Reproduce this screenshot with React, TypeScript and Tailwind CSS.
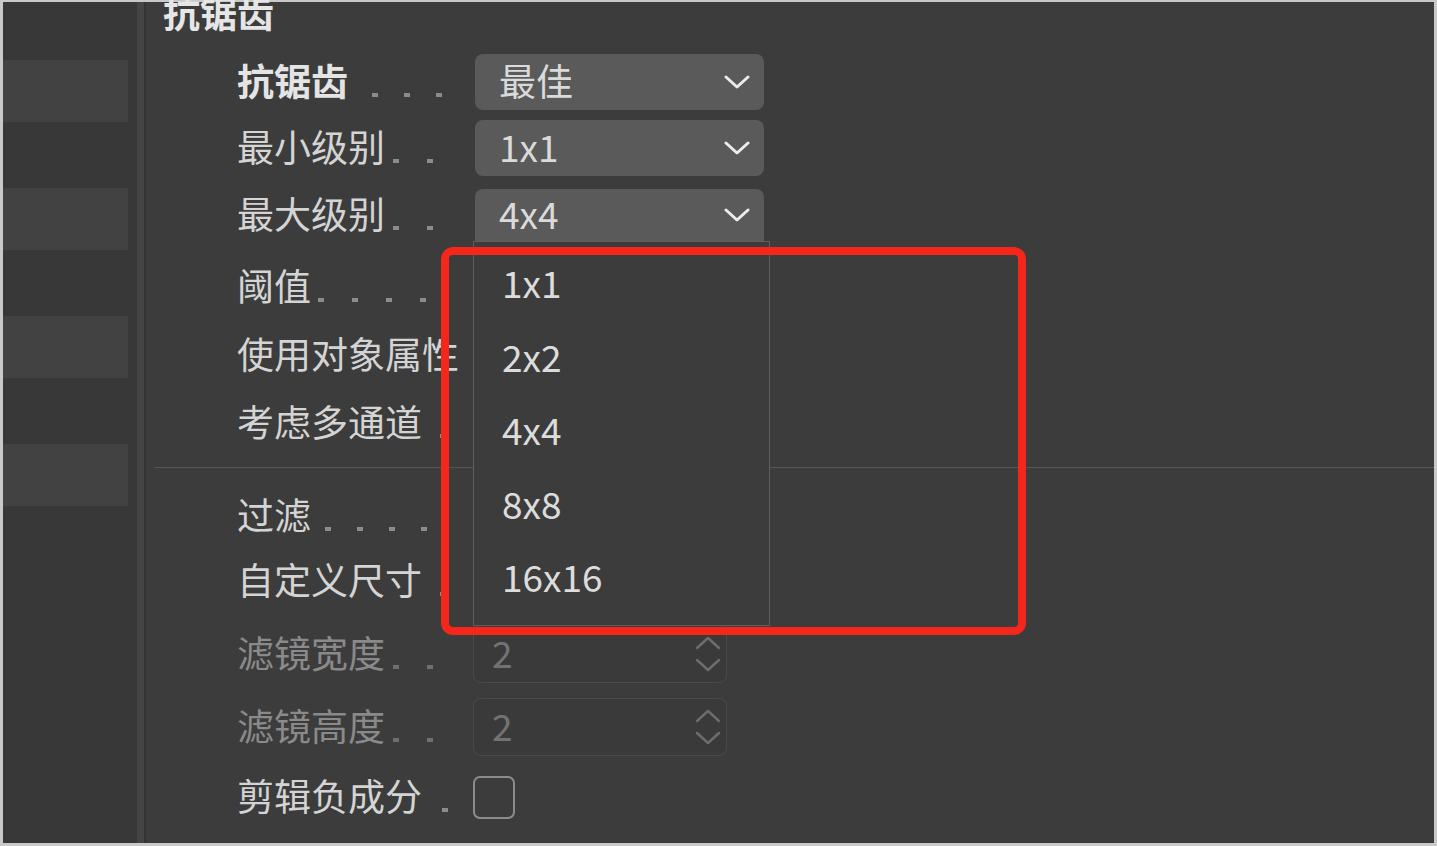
import React from "react";

type Row = {
  label: string;
  height: string;
  dots: number;
  dotMl: string;
  dotGap: string;
  bold?: boolean;
  disabled?: boolean;
  control?: "select" | "open" | "number" | "checkbox" | "none";
  value?: string;
};

const upperRows: Row[] = [
  { label: "抗锯齿", height: "h-[66px]", dots: 3, dotMl: "ml-[24px]", dotGap: "gap-[26px]", bold: true, control: "select", value: "最佳" },
  { label: "最小级别", height: "h-[66px]", dots: 2, dotMl: "ml-[8px]", dotGap: "gap-[28px]", control: "select", value: "1x1" },
  { label: "最大级别", height: "h-[68px]", dots: 2, dotMl: "ml-[8px]", dotGap: "gap-[28px]", control: "open", value: "4x4" },
  { label: "阈值", height: "h-[76px]", dots: 4, dotMl: "ml-[7px]", dotGap: "gap-[28px]", control: "none" },
  { label: "使用对象属性", height: "h-[60px]", dots: 0, dotMl: "ml-0", dotGap: "gap-0", control: "none" },
  { label: "考虑多通道", height: "h-[76px]", dots: 1, dotMl: "ml-[18px]", dotGap: "gap-0", control: "none" },
];

const lowerRows: Row[] = [
  { label: "过滤", height: "h-[64px]", dots: 4, dotMl: "ml-[14px]", dotGap: "gap-[26px]", control: "none" },
  { label: "自定义尺寸", height: "h-[66px]", dots: 1, dotMl: "ml-[18px]", dotGap: "gap-0", control: "none" },
  { label: "滤镜宽度", height: "h-[80px]", dots: 2, dotMl: "ml-[8px]", dotGap: "gap-[28px]", disabled: true, control: "number", value: "2" },
  { label: "滤镜高度", height: "h-[66px]", dots: 2, dotMl: "ml-[8px]", dotGap: "gap-[28px]", disabled: true, control: "number", value: "2" },
  { label: "剪辑负成分", height: "h-[74px]", dots: 1, dotMl: "ml-[20px]", dotGap: "gap-0", control: "checkbox" },
];

const options = ["1x1", "2x2", "4x4", "8x8", "16x16"];

const Chevron = () => (
  <svg width="26" height="16" viewBox="0 0 26 16" fill="none">
    <polyline points="2,3 13,13 24,3" stroke="#ececec" strokeWidth="3" strokeLinecap="round" strokeLinejoin="round" />
  </svg>
);

const Spin = () => (
  <div className="flex flex-col gap-[8px]">
    <svg width="26" height="14" viewBox="0 0 26 14" fill="none">
      <polyline points="2,12 13,2 24,12" stroke="#6c6c6c" strokeWidth="2.5" strokeLinecap="round" strokeLinejoin="round" />
    </svg>
    <svg width="26" height="14" viewBox="0 0 26 14" fill="none">
      <polyline points="2,2 13,12 24,2" stroke="#6c6c6c" strokeWidth="2.5" strokeLinecap="round" strokeLinejoin="round" />
    </svg>
  </div>
);

const Label = ({ row }: { row: Row }) => (
  <div className="flex items-center w-[236px] shrink-0">
    <span
      className={`whitespace-nowrap text-[37px] leading-[40px] pb-[5px] ${row.bold ? "font-bold text-[#e4e4e4]" : row.disabled ? "text-[#8a8a8a]" : "text-[#d4d4d4]"}`}
    >
      {row.label}
    </span>
    {row.dots > 0 && (
      <span className={`flex items-end h-[40px] pb-[5px] ${row.dotMl} ${row.dotGap}`}>
        {Array.from({ length: row.dots }).map((_, i) => (
          <span key={i} className={`block w-[6px] h-[4px] ${row.disabled ? "bg-[#6f6f6f]" : "bg-[#8c8c8c]"}`} />
        ))}
      </span>
    )}
  </div>
);

const Control = ({ row }: { row: Row }) => {
  if (row.control === "select") {
    return (
      <div className="ml-[2px] w-[289px] h-[56px] rounded-[8px] bg-[#5a5a5a] flex items-center justify-between pl-[24px] pr-[14px]">
        <span className="text-[37px] leading-[40px] pb-[5px] text-[#dadada]">{row.value}</span>
        <Chevron />
      </div>
    );
  }
  if (row.control === "open") {
    return (
      <div className="relative ml-[2px]">
        <div className="w-[289px] h-[52px] rounded-t-[8px] bg-[#5a5a5a] flex items-center justify-between pl-[24px] pr-[14px]">
          <span className="text-[37px] leading-[40px] pb-[5px] text-[#dadada]">{row.value}</span>
          <Chevron />
        </div>
        <div className="absolute left-[-2px] top-full w-[297px] h-[385px] bg-[#3c3c3c] border border-[#5e5e5e] pt-[6px]">
          {options.map((o) => (
            <div key={o} className="h-[73.5px] flex items-center pl-[28px] pb-[5px] text-[37px] leading-[40px] text-[#dcdcdc]">
              {o}
            </div>
          ))}
        </div>
      </div>
    );
  }
  if (row.control === "number") {
    return (
      <div className="w-[254px] h-[58px] rounded-[8px] border border-[#4a4a4a] bg-[#3a3a3a] flex items-center justify-between pl-[18px] pr-[5px]">
        <span className="text-[37px] leading-[40px] pb-[5px] text-[#727272]">{row.value}</span>
        <Spin />
      </div>
    );
  }
  if (row.control === "checkbox") {
    return <div className="w-[42px] h-[43px] rounded-[7px] border-2 border-[#8c8c8c]" />;
  }
  return null;
};

const RowView = ({ row }: { row: Row }) => (
  <div className={`flex items-center ${row.height}`}>
    <Label row={row} />
    <Control row={row} />
  </div>
);

export default function App() {
  return (
    <div className="relative w-[1437px] h-[846px] bg-[#c9c9c9] pl-[3px] pt-[2px] pr-[3px] pb-[3px] overflow-hidden font-['Noto_Sans_CJK_SC',sans-serif]">
      <div className="flex h-full">
        <aside className="w-[134px] shrink-0 bg-[#383838] flex flex-col pt-[58px] gap-[66px]">
          {[0, 1, 2, 3].map((i) => (
            <div key={i} className="w-[125px] h-[62px] bg-[#424242]" />
          ))}
        </aside>
        <div className="flex shrink-0">
          <div className="w-[7px] bg-[#454545]" />
          <div className="w-[2px] bg-[#343434]" />
        </div>
        <main className="flex-1 bg-[#3c3c3c] overflow-visible">
          <div className="-mt-[10px] ml-[17px] text-[37px] leading-[40px] pb-[5px] -mb-[5px] font-bold text-[#e6e6e6]">抗锯齿</div>
          <div className="mt-[17px] ml-[91px]">
            {upperRows.map((r) => (
              <RowView key={r.label} row={r} />
            ))}
          </div>
          <div className="ml-[9px] mt-[6px] h-px bg-[#555555]" />
          <div className="mt-[16px] ml-[91px]">
            {lowerRows.map((r) => (
              <RowView key={r.label} row={r} />
            ))}
          </div>
        </main>
      </div>
      <div className="absolute left-[441px] top-[247px] w-[585px] h-[388px] border-[8px] border-[#f5261a] rounded-[12px] pointer-events-none" />
    </div>
  );
}
